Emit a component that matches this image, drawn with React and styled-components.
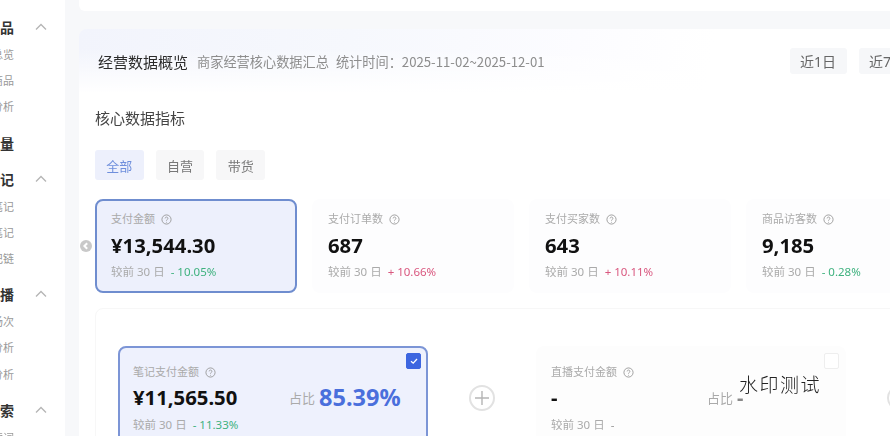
import React from 'react';
import styled, { createGlobalStyle } from 'styled-components';

const Global = createGlobalStyle`
  html, body { margin: 0; padding: 0; background: #f6f7f9; }
  body { font-family: "Noto Sans", "Noto Sans CJK SC", sans-serif; }
`;
const Page = styled.div`
  position: relative; display: flex; width: 890px; height: 436px; overflow: hidden; background: #f7f8fa;
`;
const Sidebar = styled.nav`
  flex: 0 0 65px; background: #fff; display: flex; flex-direction: column; padding-top: 13px; box-sizing: border-box;
  filter: blur(0.35px);
`;
const NavGroup = styled.div`
  display: flex; flex-direction: column; margin-bottom: ${p => p.$mb ?? 9}px;
`;
const NavHead = styled.div`
  display: flex; align-items: center; height: 28px; color: #333; font-weight: 700; font-size: 14px;
`;
const NavItem = styled.div`
  display: flex; align-items: center; height: 26.2px; color: #999; font-size: 11px;
`;
const Clip = styled.span`
  flex: 0 0 14px; display: flex; justify-content: flex-end; overflow: hidden; white-space: nowrap;
`;
const Chevron = styled.svg`
  width: 12px; height: 8px; margin-left: 21px; fill: none; stroke: #b5b5b5; stroke-width: 1.3;
`;
const Main = styled.main`
  flex: 1; min-width: 0; padding-left: 14px; display: flex; flex-direction: column; gap: 18px; overflow: hidden;
  filter: blur(0.35px);
`;
const TopCard = styled.div`
  flex: 0 0 11px; width: 900px; background: #fff; border-radius: 0 0 6px 6px;
`;
const Card = styled.section`
  flex: 1; width: 900px; background-color: #fff; border-radius: 8px 0 0 0; position: relative;
  background-image:
    linear-gradient(180deg, rgba(255,255,255,0) 30%, #fff 100%),
    linear-gradient(100deg, #f2f4fc 0%, #f6f8fd 30%, #fcfcff 55%, #fff 70%);
  background-size: 100% 64px; background-repeat: no-repeat;
`;
const Header = styled.header`
  display: flex; align-items: center; height: 66px; padding: 0 0 0 19px; box-sizing: border-box;
`;
const Title = styled.h2`
  margin: 0; font-size: 15px; font-weight: 400; color: #2b2b2b; line-height: 66px; white-space: nowrap;
`;
const Sub = styled.span`
  margin-left: ${p => p.$ml}px; margin-bottom: 2px; font-size: 13.2px; color: #8d8d8d; white-space: nowrap; font-family: "Noto Sans CJK SC", sans-serif;
`;
const Ranges = styled.div`
  margin-left: 245px; margin-bottom: 2px; display: flex; gap: 12px;
`;
const RangeBtn = styled.div`
  flex: 0 0 57px; height: 26px; background: #f6f7f9; border-radius: 3px; color: #666; font-size: 14px;
  display: flex; align-items: center; justify-content: center; white-space: nowrap;
`;
const Body = styled.div`
  padding: 8px 0 0 16px;
`;
const Section = styled.h3`
  margin: 0; font-size: 15px; font-weight: 400; color: #444; line-height: 30px;
`;
const Tabs = styled.div`
  display: flex; gap: 12px; margin-top: 17px;
`;
const Tab = styled.div`
  width: 48.7px; height: 30px; border-radius: 3px; font-size: 13px; display: flex; align-items: center; justify-content: center;
  background: ${p => p.$active ? '#edf0fc' : '#f7f7f8'}; color: ${p => p.$active ? '#6f8fdc' : '#777'};
`;
const Metrics = styled.div`
  position: relative; display: flex; gap: 15px; margin-top: 19px;
`;
const Metric = styled.div`
  flex: 0 0 202px; height: 94px; box-sizing: border-box; padding: 10px 14px; border-radius: 8px;
  border: 2px solid ${p => p.$active ? '#6f8dcf' : 'transparent'};
  background: ${p => p.$active ? '#edf0fc' : '#fdfdfe'};
`;
const Label = styled.div`
  display: flex; align-items: center; gap: 6px; font-size: 11px; line-height: 16px; color: #aaa;
`;
const Help = styled.svg`
  width: 11px; height: 11px; fill: none; stroke: #999; stroke-width: 1;
`;
const Value = styled.div`
  font-size: 20.3px; font-weight: 700; color: #111; line-height: 28px; margin-top: 4px; white-space: nowrap;
`;
const Compare = styled.div`
  font-size: 11.5px; line-height: 16px; color: #aaa; margin-top: 5px; white-space: nowrap; display: flex; gap: 6px;
`;
const Delta = styled.span`
  color: ${p => p.$up ? '#d9577f' : p.$down ? '#3fb27f' : '#999'};
`;
const Prev = styled.div`
  position: absolute; left: -15px; top: 41px; width: 12px; height: 12px; border-radius: 50%; background: #c9c9c9;
  display: flex; align-items: center; justify-content: center;
`;
const PrevIcon = styled.svg`
  width: 8px; height: 8px; fill: none; stroke: #fff; stroke-width: 2;
`;
const Panel = styled.div`
  display: flex; align-items: flex-start; margin-top: 15px; padding: 37px 0 0 22px; height: 200px;
  box-sizing: border-box; border: 1px solid #f7f7f7; border-radius: 8px; width: 900px;
`;
const Channel = styled.div`
  position: relative; flex: 0 0 310px; height: 120px; box-sizing: border-box; padding: 16px 13px; border-radius: 8px;
  border: 2px solid ${p => p.$active ? '#7c95d6' : 'transparent'};
  background: ${p => p.$active ? '#eef1fd' : '#fdfdfd'};
`;
const ChannelRow = styled.div`
  display: flex; align-items: center; margin-top: 2px; height: 30px;
`;
const ChannelValue = styled(Value)`
  flex: 0 0 156px; margin: 0;
`;
const Share = styled.span`
  font-size: 13px; color: #aaa; margin-right: 4px;
`;
const ShareValue = styled.span`
  font-size: ${p => p.$muted ? 20 : 23.5}px; font-weight: 700; color: ${p => p.$muted ? '#888' : '#4a6fdc'};
`;
const Check = styled.div`
  position: absolute; top: 5px; right: 5px; width: 15px; height: 16px; border-radius: 2px; box-sizing: border-box;
  display: flex; align-items: center; justify-content: center;
  background: ${p => p.$on ? '#3d66e0' : '#fff'}; border: 1px solid ${p => p.$on ? '#3d66e0' : '#eee'};
`;
const CheckIcon = styled.svg`
  width: 10px; height: 10px; fill: none; stroke: #fff; stroke-width: 1.3;
`;
const PlusSlot = styled.div`
  flex: 0 0 108px; height: 104px; display: flex; align-items: center; justify-content: center;
`;
const PlusIcon = styled.svg`
  width: 26px; height: 26px; fill: none; stroke: #b5b5b5; stroke-width: 1.4;
`;
const Watermark = styled.div`
  position: absolute; left: 739px; top: 371px; font-size: 19px; line-height: 26px; color: #222; letter-spacing: 1.5px;
  font-family: "Noto Sans CJK SC", serif; font-weight: 300; white-space: nowrap;
`;

const HelpMark = () => (
  <Help viewBox="0 0 12 12"><circle cx="6" cy="6" r="5" /><path d="M4.5 4.8a1.5 1.5 0 1 1 2.3 1.3c-.5.3-.8.6-.8 1.1M6 8.6v.8" /></Help>
);
const Up = () => <Chevron viewBox="0 0 12 8"><path d="M1 6.5 6 1.5l5 5" /></Chevron>;
const Plus = () => (
  <PlusIcon viewBox="0 0 26 26"><circle cx="13" cy="13" r="12" stroke="#e2e2e2" strokeWidth="2" /><path d="M6 13h14M13 6v14" /></PlusIcon>
);

const nav = [
  { head: '商品', open: true, items: ['商品总览', '全部商品', '商品分析'] },
  { head: '流量', mb: 8 },
  { head: '笔记', open: true, items: ['全部笔记', '带货笔记', '笔记链'] },
  { head: '直播', icon: '直播', open: true, items: ['直播场次', '直播分析', '带货分析'] },
  { head: '搜索', open: true, items: ['搜索词'] },
];
const metrics = [
  { label: '支付金额', value: '¥13,544.30', delta: '- 10.05%', down: true, active: true },
  { label: '支付订单数', value: '687', delta: '+ 10.66%', up: true },
  { label: '支付买家数', value: '643', delta: '+ 10.11%', up: true },
  { label: '商品访客数', value: '9,185', delta: '- 0.28%', down: true },
];

export default function App() {
  return (
    <Page>
      <Global />
      <Sidebar>
        {nav.map(g => (
          <NavGroup key={g.head} $mb={g.mb}>
            <NavHead><Clip>{g.head === '直播' ? '直播' : g.head}</Clip>{g.open && <Up />}</NavHead>
            {(g.items || []).map(i => <NavItem key={i}><Clip>{i}</Clip></NavItem>)}
          </NavGroup>
        ))}
      </Sidebar>
      <Main>
        <TopCard />
        <Card>
          <Header>
            <Title>经营数据概览</Title>
            <Sub $ml={9}>商家经营核心数据汇总</Sub>
            <Sub $ml={7}>统计时间：2025-11-02~2025-12-01</Sub>
            <Ranges>
              <RangeBtn>近1日</RangeBtn>
              <RangeBtn>近7日</RangeBtn>
            </Ranges>
          </Header>
          <Body>
            <Section>核心数据指标</Section>
            <Tabs>
              <Tab $active>全部</Tab>
              <Tab>自营</Tab>
              <Tab>带货</Tab>
            </Tabs>
            <Metrics>
              <Prev><PrevIcon viewBox="0 0 8 8"><path d="M5.2 1.2 2.4 4l2.8 2.8" /></PrevIcon></Prev>
              {metrics.map(m => (
                <Metric key={m.label} $active={m.active}>
                  <Label>{m.label}<HelpMark /></Label>
                  <Value>{m.value}</Value>
                  <Compare>较前 30 日 <Delta $up={m.up} $down={m.down}>{m.delta}</Delta></Compare>
                </Metric>
              ))}
            </Metrics>
            <Panel>
              <Channel $active>
                <Label>笔记支付金额<HelpMark /></Label>
                <ChannelRow>
                  <ChannelValue>¥11,565.50</ChannelValue>
                  <Share>占比</Share><ShareValue>85.39%</ShareValue>
                </ChannelRow>
                <Compare>较前 30 日 <Delta $down>- 11.33%</Delta></Compare>
                <Check $on><CheckIcon viewBox="0 0 10 10"><path d="M2 5.2 4.2 7.2 8 3" /></CheckIcon></Check>
              </Channel>
              <PlusSlot><Plus /></PlusSlot>
              <Channel>
                <Label>直播支付金额<HelpMark /></Label>
                <ChannelRow>
                  <ChannelValue>-</ChannelValue>
                  <Share>占比</Share><ShareValue $muted>-</ShareValue>
                </ChannelRow>
                <Compare>较前 30 日 <Delta>-</Delta></Compare>
                <Check />
              </Channel>
              <PlusSlot><Plus /></PlusSlot>
            </Panel>
          </Body>
        </Card>
      </Main>
      <Watermark>水印测试</Watermark>
    </Page>
  );
}
